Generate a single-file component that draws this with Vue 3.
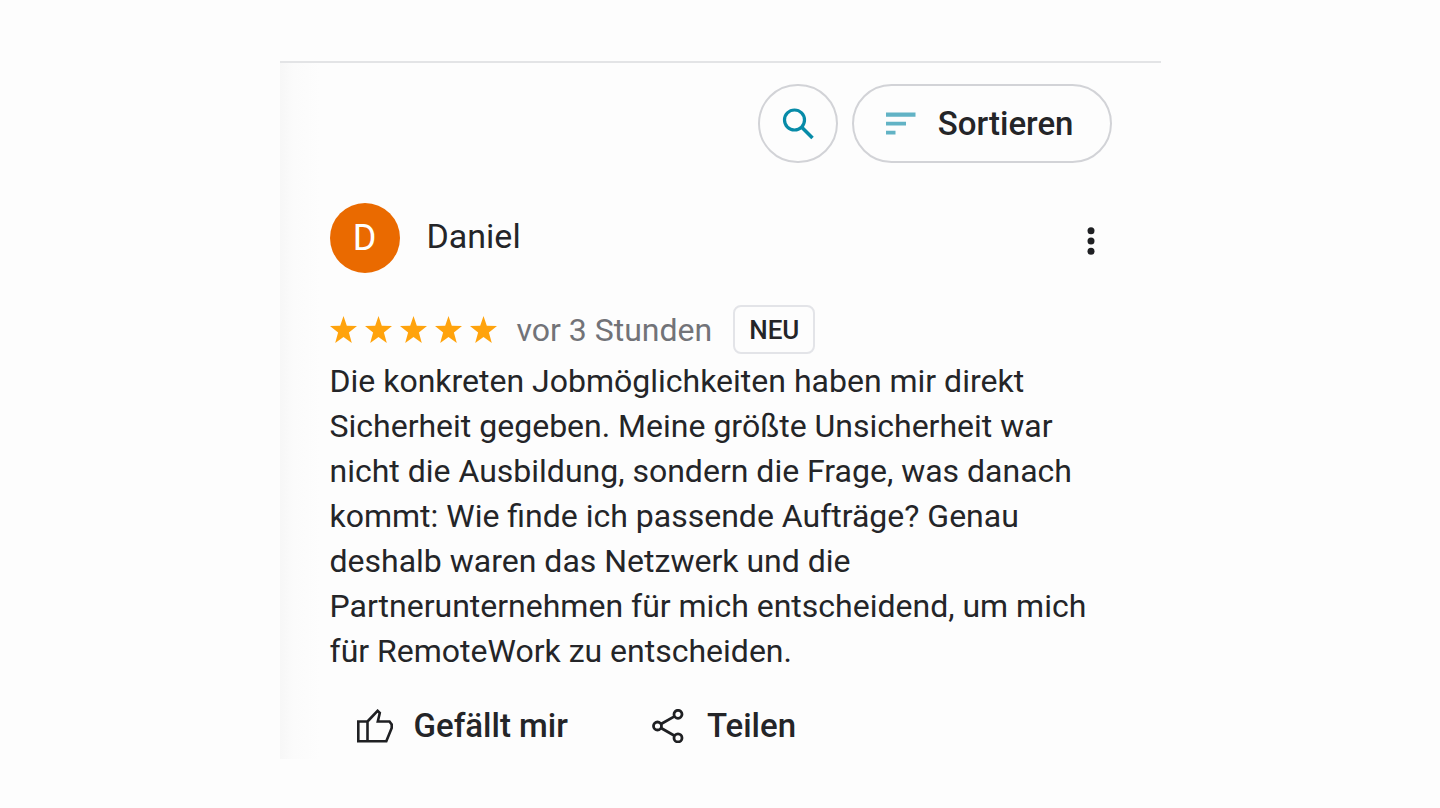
<script setup>
const stars = 5
const review =
  'Die konkreten Jobmöglichkeiten haben mir direkt Sicherheit gegeben. Meine größte Unsicherheit war nicht die Ausbildung, sondern die Frage, was danach kommt: Wie finde ich passende Aufträge? Genau deshalb waren das Netzwerk und die Partnerunternehmen für mich entscheidend, um mich für RemoteWork zu entscheiden.'
</script>

<template>
  <main class="page">
    <section class="panel">
      <div class="toolbar">
        <button class="pill round" type="button" aria-label="Suchen">
          <svg width="32" height="32" viewBox="0 0 32 32" fill="none" stroke="#078ba8">
            <circle cx="12.5" cy="12" r="10" stroke-width="3.2" />
            <path d="M19.5 19L30.5 30" stroke-width="3.6" />
          </svg>
        </button>
        <button class="pill sort" type="button">
          <svg width="30" height="24" viewBox="0 0 30 24" fill="#62b3c5">
            <path d="M0 0.5h29.5v4.3H0zM0 9.7h20v3.8H0zM0 18.8h9.5v3.8H0z" />
          </svg>
          <span>Sortieren</span>
        </button>
      </div>

      <article class="review">
        <header class="author">
          <span class="avatar">D</span>
          <h2 class="name">Daniel</h2>
          <button class="more" type="button" aria-label="Weitere Optionen">
            <svg width="8" height="28" viewBox="0 0 8 28" fill="#1f2023">
              <circle cx="4" cy="3.7" r="3.5" />
              <circle cx="4" cy="14" r="3.5" />
              <circle cx="4" cy="24.3" r="3.5" />
            </svg>
          </button>
        </header>

        <div class="meta">
          <span class="stars" role="img" aria-label="5 von 5 Sternen">
            <svg v-for="n in stars" :key="n" width="27" height="27" viewBox="0 0 27 27" fill="#ffa30d">
              <path d="M13.5 0L16.8 9.7L27 10L18.9 16.4L21.8 27L13.5 21L5.2 27L8.1 16.4L0 10L10.2 9.7Z" />
            </svg>
          </span>
          <time class="when">vor 3 Stunden</time>
          <span class="badge">NEU</span>
        </div>

        <p class="text">{{ review }}</p>

        <footer class="actions">
          <button class="action" type="button">
            <svg width="36" height="34" viewBox="0 0 36 34" fill="none" stroke="#1f2023" stroke-width="2.6">
              <path d="M1.3 12.5H10.5V32.2H1.3ZM10.5 12.5L20.6 1.8L22.8 4L20.8 12.5H32.5L34.7 15.5V19L29.3 32.2H10.5" />
            </svg>
            <span>Gefällt mir</span>
          </button>
          <button class="action" type="button">
            <svg width="34" height="34" viewBox="0 0 34 34" fill="none" stroke="#1f2023" stroke-width="2.8">
              <circle cx="5.5" cy="17" r="4" />
              <circle cx="26" cy="5.3" r="4" />
              <circle cx="26" cy="28.9" r="4" />
              <path d="M9 15L22.5 7.4M9 19L22.5 26.8" />
            </svg>
            <span>Teilen</span>
          </button>
        </footer>
      </article>
    </section>
  </main>
</template>

<style>
body {
  background: #fdfdfd;
}
</style>

<style scoped>
.page {
  padding: 61px 24px 48px;
  font-family: Roboto, "Liberation Sans", sans-serif;
  color: #242528;
}
.panel {
  box-sizing: border-box;
  max-width: 881px;
  margin: 0 auto;
  padding: 21px 49px 13px 50px;
  border-top: 2px solid #e3e4e6;
  background: linear-gradient(90deg, #f7f7f7, #fbfbfb 14px, #fdfdfd 40px);
}
button {
  margin: 0;
  padding: 0;
  border: 0;
  background: none;
  font: inherit;
  color: inherit;
  cursor: pointer;
}
svg {
  display: block;
  flex: none;
}
.toolbar {
  display: flex;
  justify-content: flex-end;
  gap: 14px;
}
.pill {
  box-sizing: border-box;
  display: flex;
  align-items: center;
  justify-content: center;
  height: 79px;
  border: 2px solid #d2d3d7;
  border-radius: 40px;
}
.round {
  width: 80px;
}
.sort {
  gap: 22px;
  padding: 0 36px 0 32px;
  font-size: 33px;
  font-weight: 500;
}
.author {
  display: flex;
  align-items: center;
  margin-top: 40px;
}
.avatar {
  width: 70px;
  height: 70px;
  border-radius: 50%;
  background: #ea6a00;
  color: #fff;
  font-size: 36px;
  line-height: 70px;
  text-align: center;
}
.name {
  margin: 0 auto 4px 27px;
  font-size: 34px;
  font-weight: 400;
  line-height: 40px;
}
.more {
  padding: 6px 17px 0;
}
.meta {
  display: flex;
  align-items: center;
  margin-top: 32px;
}
.stars {
  display: flex;
  gap: 8px;
}
.when {
  margin-left: 20px;
  font-size: 32px;
  color: #727378;
}
.badge {
  box-sizing: border-box;
  height: 49px;
  margin-left: 21px;
  padding: 0 14px;
  border: 2px solid #e3e4e8;
  border-radius: 8px;
  font-size: 26px;
  font-weight: 500;
  line-height: 46px;
}
.text {
  max-width: 776px;
  margin: 5px 0 0;
  font-size: 32px;
  line-height: 45px;
}
.actions {
  display: flex;
  gap: 84px;
  margin-top: 32px;
  padding-left: 27px;
}
.action {
  display: flex;
  align-items: center;
  gap: 21px;
  font-size: 33px;
  font-weight: 500;
  line-height: 40px;
}
</style>
